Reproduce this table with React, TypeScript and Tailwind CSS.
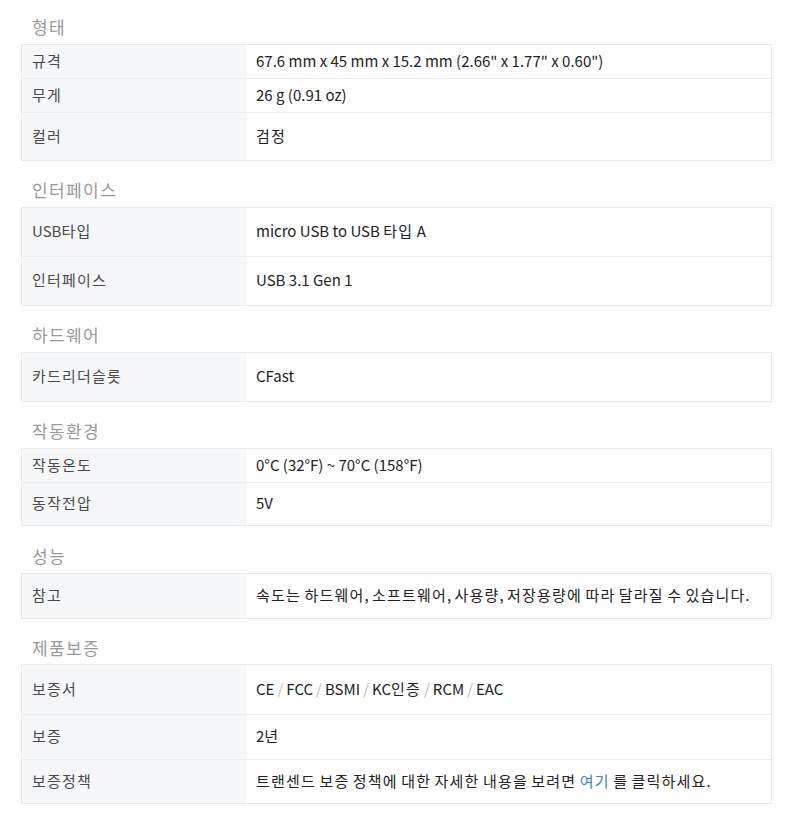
// 한글 구간만 자간을 넓혀 원본 폰트 폭에 맞춘다
function K({ t, ls = 'tracking-[1.2px]' }: { t: string; ls?: string }) {
  const parts = t.split(/([\uAC00-\uD7A3]+)/);
  return (
    <>
      {parts.map((p, i) =>
        /[\uAC00-\uD7A3]/.test(p) ? (
          <span key={i} className={ls}>
            {p}
          </span>
        ) : (
          <span key={i} className="whitespace-pre">{p}</span>
        ),
      )}
    </>
  );
}

type Row = { label: string; value: React.ReactNode; h: number };

const sections: { title: string; head: string; rows: Row[] }[] = [
  {
    title: '형태',
    head: 'h-[44px] pt-[10px]',
    rows: [
      { label: '규격', value: <K t={'67.6 mm x 45 mm x 15.2 mm (2.66" x 1.77" x 0.60")'} />, h: 34 },
      { label: '무게', value: <K t="26 g (0.91 oz)" />, h: 34 },
      { label: '컬러', value: <K t="검정" />, h: 49 },
    ],
  },
  {
    title: '인터페이스',
    head: 'h-[46px] pt-[12px]',
    rows: [
      { label: 'USB타입', value: <K t="micro USB to USB 타입 A" />, h: 49 },
      { label: '인터페이스', value: <K t="USB 3.1 Gen 1" />, h: 50 },
    ],
  },
  {
    title: '하드웨어',
    head: 'h-[46px] pt-[12px]',
    rows: [{ label: '카드리더슬롯', value: <K t="CFast" />, h: 50 }],
  },
  {
    title: '작동환경',
    head: 'h-[46px] pt-[12px]',
    rows: [
      { label: '작동온도', value: <K t="0°C (32°F) ~ 70°C (158°F)" />, h: 34 },
      { label: '동작전압', value: <K t="5V" />, h: 44 },
    ],
  },
  {
    title: '성능',
    head: 'h-[47px] pt-[12px]',
    rows: [
      {
        label: '참고',
        value: <K t="속도는 하드웨어, 소프트웨어, 사용량, 저장용량에 따라 달라질 수 있습니다." />,
        h: 46,
      },
    ],
  },
  {
    title: '제품보증',
    head: 'h-[45px] pt-[12px]',
    rows: [
      {
        label: '보증서',
        value: (
          <>
            {['CE', 'FCC', 'BSMI', 'KC인증', 'RCM', 'EAC'].map((c, i) => (
              <span key={i}>
                {i > 0 && <span className="text-[#bbb] mx-[3px]">/</span>}
                <K t={c} />
              </span>
            ))}
          </>
        ),
        h: 50,
      },
      { label: '보증', value: <K t="2년" />, h: 45 },
      {
        label: '보증정책',
        value: (
          <>
            <K t="트랜센드 보증 정책에 대한 자세한 내용을 보려면 " />
            <span className="text-[#3b7fc0]">
              <K t="여기" />
            </span>
            <K t=" 를 클릭하세요." />
          </>
        ),
        h: 45,
      },
    ],
  },
];

export default function App() {
  return (
    <div
      className="bg-white min-h-[826px] pl-[21px] pb-6"
      style={{ fontFamily: '"Noto Sans CJK KR", "Noto Sans", sans-serif' }}
    >
      <div className="w-[751px]">
        {sections.map((s, si) => (
          <div key={si}>
            <div className={`flex items-center pl-[11px] text-[17px] tracking-[1.4px] text-[#999] ${s.head}`}>
              {s.title}
            </div>
            <div className="border border-[#e9e9e9]">
              {s.rows.map((r, ri) => (
                <div
                  key={ri}
                  className={`flex text-[15px] ${ri > 0 ? 'border-t border-[#ececec]' : ''}`}
                  style={{
                    height: r.h - (ri === 0 ? 1 : 0) - (ri === s.rows.length - 1 ? 1 : 0),
                  }}
                >
                  <div className="w-[225px] shrink-0 bg-[#f6f7f9] flex items-center pl-[10px] pb-[1px] text-[#4a4a4a]">
                    <K t={r.label} />
                  </div>
                  <div className="flex-1 flex items-center pl-[9px] pb-[1px] text-[#222]">{r.value}</div>
                </div>
              ))}
            </div>
          </div>
        ))}
      </div>
    </div>
  );
}
